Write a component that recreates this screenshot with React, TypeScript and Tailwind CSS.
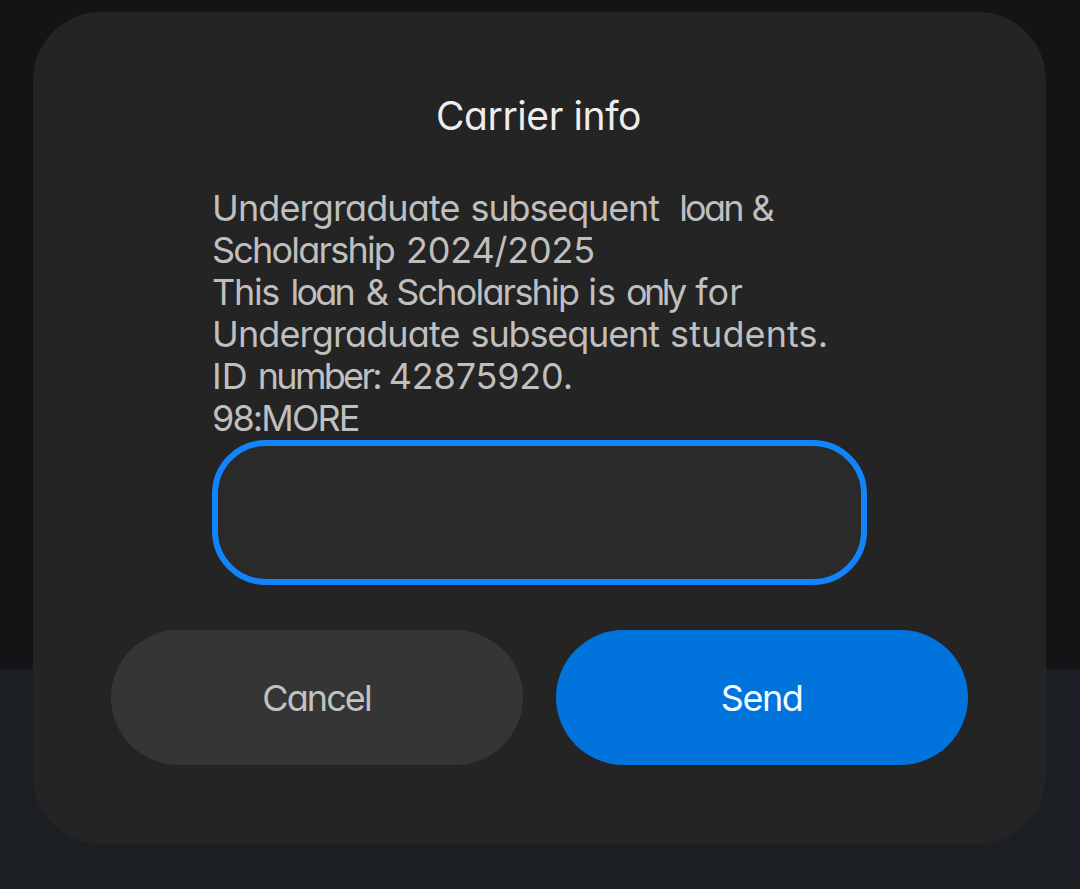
import { Fragment } from "react";

type Word = [text: string, tracking: number, after?: number];

const message: Word[][] = [
  [["Undergraduate", -0.87], ["subsequent", -1.15, -1], ["", 0], ["loan", -2.8, -3], ["&", 0]],
  [["Scholarship", -1.8], ["2024/2025", -0.2]],
  [["This", -1.3], ["loan", -2.8], ["&", 0, -3], ["Scholarship", -1.8, -2], ["is", 0], ["only", -3.6, -2], ["for", 0]],
  [["Undergraduate", -0.87], ["subsequent", -1.15], ["students.", 0.1]],
  [["ID", 0], ["number:", -2.7, -4], ["42875920.", -0.2]],
  [["98:MORE", -1.9]],
];

function Line({ words }: { words: Word[] }) {
  return (
    <p>
      {words.map(([text, tracking, after = 0], i) => (
        <Fragment key={i}>
          {i > 0 && " "}
          <span style={{ letterSpacing: tracking, marginRight: after - tracking }}>{text}</span>
        </Fragment>
      ))}
    </p>
  );
}

export default function App() {
  return (
    <div className="flex h-[889px] w-[1080px] flex-col bg-[linear-gradient(to_bottom,#131416_669px,#1b1e23_669px)] pt-3 pl-[33px] font-['Inter',sans-serif] [font-feature-settings:'cv11']">
      <main className="flex h-[832px] w-[1013px] flex-col rounded-[68px] bg-[#242424] pt-20">
        <h1 className="pr-0.5 text-center text-[39px] leading-[48px] tracking-[-0.4px] text-[#ededed]">Carrier info</h1>
        <div className="mt-[47px] ml-[179px] text-[36px] leading-[42px] whitespace-pre text-[#bfbfbf]">
          {message.map((words, i) => (
            <Line key={i} words={words} />
          ))}
        </div>
        <input
          type="text"
          aria-label="Reply"
          className="mt-px ml-[179px] h-[145px] w-[655px] rounded-[54px] border-6 border-[#1284fb] bg-[#2a2a2a] px-8 text-[36px] text-[#ededed] outline-none"
        />
        <div className="mt-[45px] ml-[78px] flex gap-[33px] text-[36px]">
          <button className="h-[135px] w-[412px] rounded-full bg-[#353535] pr-px tracking-[-1.9px] text-[#c2c2c2]">Cancel</button>
          <button className="h-[135px] w-[412px] rounded-full bg-[#0073dd] pr-px tracking-[-1.5px] text-[#f5fbff]">Send</button>
        </div>
      </main>
    </div>
  );
}
